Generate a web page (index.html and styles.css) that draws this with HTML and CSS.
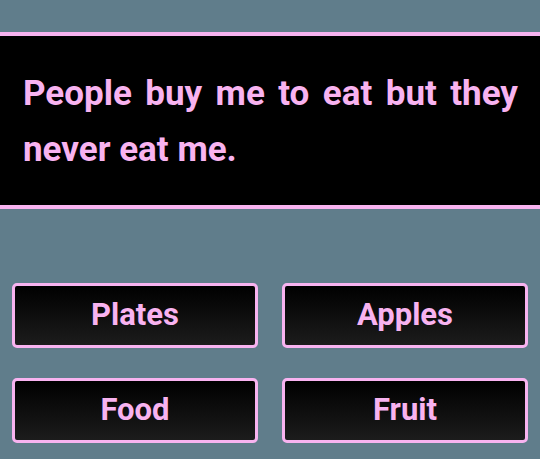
FILE: index.html
```html
<!DOCTYPE html>
<html>
<head>
<meta charset="utf-8">
<link rel="stylesheet" href="styles.css">
</head>
<body>
<div class="screen">
  <div class="question">
    <p class="question-text">People buy me to eat but they never eat me.</p>
  </div>
  <div class="answers">
    <button class="answer">Plates</button>
    <button class="answer">Apples</button>
    <button class="answer">Food</button>
    <button class="answer">Fruit</button>
  </div>
</div>
</body>
</html>
```
FILE: styles.css
```css
html, body {
  margin: 0;
  padding: 0;
  background: #607d8b;
  font-family: Roboto, "Liberation Sans", sans-serif;
}
.screen {
  width: 540px;
  height: 459px;
  overflow: hidden;
  padding-top: 32px;
  box-sizing: border-box;
}
.question {
  background: #000;
  border-top: 4px solid #f8b3f0;
  border-bottom: 4px solid #f8b3f0;
  padding: 30px 22px 27px 23px;
}
.question-text {
  margin: 0;
  color: #f8b3f0;
  font-weight: 700;
  font-size: 35px;
  line-height: 56px;
  text-align: justify;
}
.answers {
  display: grid;
  grid-template-columns: 1fr 1fr;
  column-gap: 24px;
  row-gap: 30px;
  padding: 74px 12px 0 12px;
}
.answer {
  height: 65px;
  border: 3px solid #f8b3f0;
  border-radius: 5px;
  background: linear-gradient(#000, #1c1c1c);
  color: #f8b3f0;
  font-family: Roboto, "Liberation Sans", sans-serif;
  font-weight: 700;
  font-size: 31px;
  padding: 0 0 3px 0;
}
```
